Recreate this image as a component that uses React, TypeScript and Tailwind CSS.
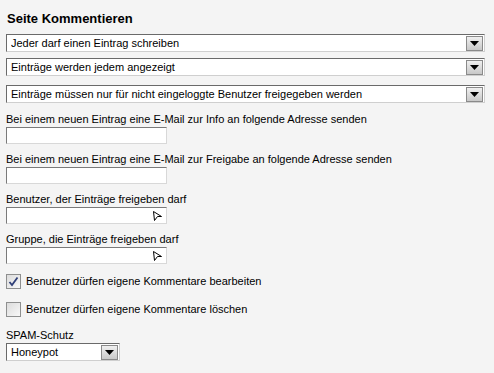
import React from "react";

const font = { fontFamily: '"Liberation Sans", Arial, sans-serif' };

function DropButton({ className = "" }: { className?: string }) {
  return (
    <span
      className={`flex h-[15px] w-[17px] items-center justify-center border border-[#8a8a8a] bg-gradient-to-b from-[#f0f0f0] to-[#c8c8c8] ${className}`}
    >
      <svg width="9" height="5" viewBox="0 0 9 5">
        <path d="M0 0h9L4.5 5z" fill="#000" />
      </svg>
    </span>
  );
}

function Select({ label, className = "" }: { label: string; className?: string }) {
  return (
    <div
      className={`flex h-[18px] items-center border-t border-l border-[#6a6a6a] border-b border-r border-b-[#cfcfcf] border-r-[#cfcfcf] bg-white pl-[4px] pr-[1px] ${className}`}
    >
      <span className="flex-1 truncate text-[11px] leading-none text-black">{label}</span>
      <DropButton />
    </div>
  );
}

function PickerIcon() {
  return (
    <svg width="11" height="12" viewBox="0 0 11 12">
      <path d="M1.5 1.5 L9.5 6.5 L5.5 6.5 L2.5 10.5 Z" fill="#fff" stroke="#000" strokeWidth="1" />
    </svg>
  );
}

function TextInput({ picker = false }: { picker?: boolean }) {
  return (
    <div className="flex h-[17px] w-[161px] items-center justify-end border-t border-l border-[#7a7a7a] border-b border-r border-b-[#d8d8d8] border-r-[#d8d8d8] bg-white pr-[3px]">
      {picker ? <PickerIcon /> : null}
    </div>
  );
}

function Field({ label, picker }: { label: string; picker?: boolean }) {
  return (
    <div className="flex flex-col gap-[1px]">
      <span className="text-[11px] leading-[13px] text-black">{label}</span>
      <TextInput picker={picker} />
    </div>
  );
}

function Checkbox({ checked, label }: { checked: boolean; label: string }) {
  return (
    <div className="flex items-center gap-[5px]">
      <span className="flex h-[15px] w-[15px] items-center justify-center border border-[#8e8f8f] bg-gradient-to-br from-[#dcdcdc] to-[#f8f8f8]">
        {checked ? (
          <svg width="11" height="11" viewBox="0 0 11 11">
            <path d="M1.5 6 L4 9 L9.5 1.5" fill="none" stroke="#2f3f78" strokeWidth="1.8" />
          </svg>
        ) : null}
      </span>
      <span className="text-[11px] leading-none text-black">{label}</span>
    </div>
  );
}

export default function App() {
  return (
    <div className="h-[373px] w-[494px] bg-[#f4f4f4] pl-[6px] pt-[11px]" style={font}>
      <h1 className="pl-[1px] text-[13px] font-bold leading-[15px] text-black">Seite Kommentieren</h1>
      <div className="mt-[8px] flex w-[479px] flex-col gap-[6px]">
        <Select label="Jeder darf einen Eintrag schreiben" />
        <Select label="Einträge werden jedem angezeigt" />
        <Select label="Einträge müssen nur für nicht eingeloggte Benutzer freigegeben werden" className="mt-[3px]" />
      </div>
      <div className="mt-[10px] flex flex-col gap-[9px]">
        <Field label="Bei einem neuen Eintrag eine E-Mail zur Info an folgende Adresse senden" />
        <Field label="Bei einem neuen Eintrag eine E-Mail zur Freigabe an folgende Adresse senden" />
        <Field label="Benutzer, der Einträge freigeben darf" picker />
        <Field label="Gruppe, die Einträge freigeben darf" picker />
      </div>
      <div className="mt-[10px] flex flex-col gap-[13px]">
        <Checkbox checked label="Benutzer dürfen eigene Kommentare bearbeiten" />
        <Checkbox checked={false} label="Benutzer dürfen eigene Kommentare löschen" />
      </div>
      <div className="mt-[12px] flex flex-col gap-[1px]">
        <span className="text-[11px] leading-[13px] text-black">SPAM-Schutz</span>
        <Select label="Honeypot" className="w-[114px]" />
      </div>
    </div>
  );
}
